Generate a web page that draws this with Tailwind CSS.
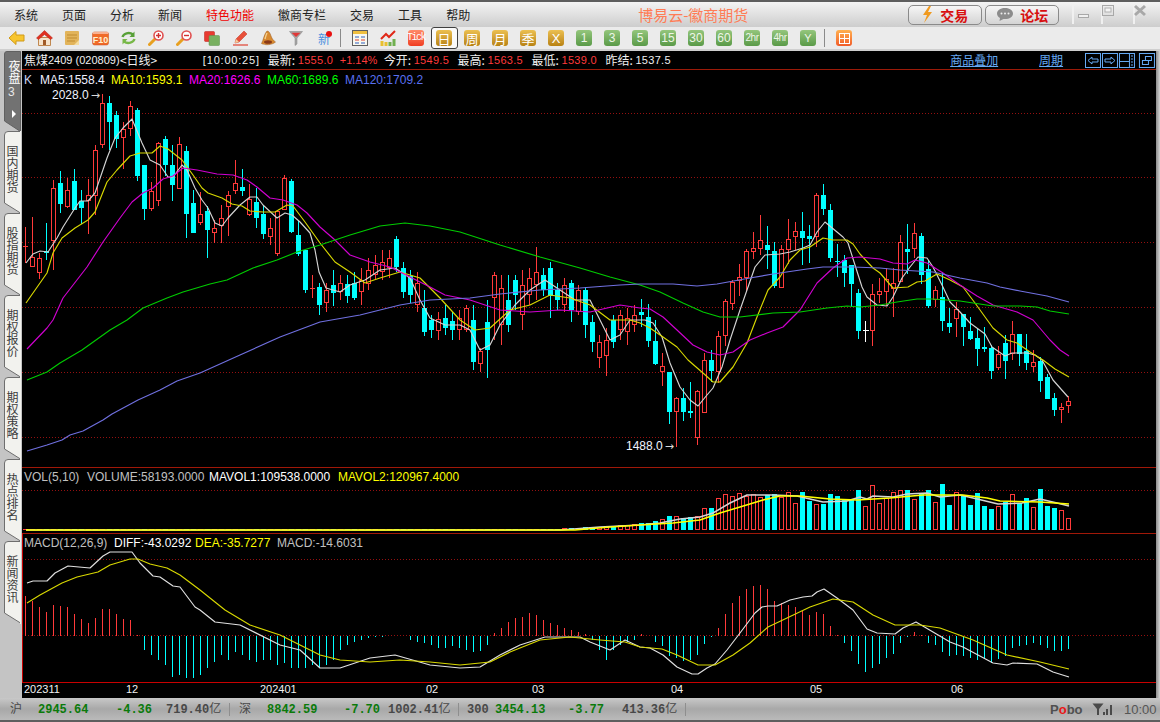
<!DOCTYPE html>
<html lang="zh-CN">
<head>
    <meta charset="UTF-8" />
    <title>博易云-徽商期货</title>
    <script src="https://cdn.jsdelivr.net/npm/@tailwindcss/browser@4"></script>
</head>
<body class="bg-[#c4c4c4]">
<div class="w-[1160px] h-[722px] overflow-hidden flex flex-col text-[12px] leading-none [font-family:'Liberation_Sans','Noto_Sans_CJK_SC',sans-serif]">

    <!-- Title bar -->
    <div class="h-[27px] shrink-0 flex items-center border-t-2 border-[#5e5e5e] bg-gradient-to-b from-[#f4f4f4] to-[#cdcdcd] text-[#222]">
        <div class="flex pl-[14px] gap-[24px] [font-family:'Noto_Sans_CJK_SC',sans-serif]">
            <span>系统</span><span>页面</span><span>分析</span><span>新闻</span>
            <span class="text-[#f00000]">特色功能</span>
            <span>徽商专栏</span><span>交易</span><span>工具</span><span>帮助</span>
        </div>
        <div class="ml-[168px] w-[270px] text-[15px] text-[#ff7c55] [font-family:'Noto_Sans_CJK_SC',sans-serif]">博易云-徽商期货</div>
        <button class="w-[74px] h-[20px] flex items-center justify-center gap-[7px] rounded-[5px] border border-[#8a8a8a] bg-gradient-to-b from-[#f6f6f6] to-[#d4d4d4] text-[#d81010] text-[14px] font-bold [font-family:'Noto_Sans_CJK_SC',sans-serif]">
            <svg width="11" height="17" viewBox="0 0 11 17"><path d="M7 0 L1 9 H5 L2 17 L10 6 H6 L9 0 Z" fill="#f09a20"/></svg>
            交易
        </button>
        <button class="ml-[3px] w-[74px] h-[20px] flex items-center justify-center gap-[6px] rounded-[5px] border border-[#8a8a8a] bg-gradient-to-b from-[#f6f6f6] to-[#d4d4d4] text-[#d81010] text-[14px] font-bold [font-family:'Noto_Sans_CJK_SC',sans-serif]">
            <svg width="18" height="15" viewBox="0 0 18 15"><path d="M9 1 C4 1 1 3.5 1 6.5 C1 8.5 2.4 10 4 11 L3.5 14 L7.5 12 C13 12.500 17 10 17 6.500 C17 3.500 14 1 9 1 Z" fill="#8c8c8c"/><circle cx="5.500" cy="6.500" r="1" fill="#eee"/><circle cx="9" cy="6.500" r="1" fill="#eee"/><circle cx="12.500" cy="6.500" r="1" fill="#eee"/></svg>
            论坛
        </button>
        <svg class="ml-[13px]" width="84" height="22" viewBox="0 0 84 22">
            <path d="M1 0V20M30 0V20M62 0V20" stroke="#f0f0f0" stroke-width="2"/>
            <rect x="6.500" y="10.500" width="10" height="3" fill="#f0f0f0" stroke="#a8a8a8"/>
            <rect x="30.500" y="1.500" width="11" height="10" fill="none" stroke="#a8a8a8"/>
            <rect x="33" y="4" width="6" height="4" fill="#f4f4f4" stroke="#b0b0b0"/>
            <path d="M63 2 L73 11 M73 2 L63 11" stroke="#a8a8a8" stroke-width="3"/>
        </svg>
    </div>

    <!-- Toolbar -->
    <div class="h-[24px] shrink-0 flex items-center pl-[2px] bg-[#ebebeb] border-b-2 border-[#cfcfcf] text-[#fff]">
        <div class="w-[28px] flex justify-center"><svg width="17" height="16" viewBox="0 0 17 16"><path d="M1 8 L8 1.500 V5 H16 V11 H8 V14.500 Z" fill="#f7c52e" stroke="#d09a18"/></svg></div>
        <div class="w-[28px] flex justify-center"><svg width="17" height="16" viewBox="0 0 17 16"><path d="M2.500 7.500 V15.500 H14.500 V7.500 Z" fill="#f6e4cc" stroke="#c08850"/><path d="M7 10 H10 V15 H7 Z" fill="#a05a28"/><path d="M0.500 8 L8.500 0.500 L16.500 8 L14.500 9.500 L8.500 4.500 L2.500 9.500 Z" fill="#e03020" stroke="#b02010" stroke-width="0.500"/></svg></div>
        <div class="w-[28px] flex justify-center"><svg width="16" height="16" viewBox="0 0 16 16"><rect x="1" y="1" width="14" height="14" rx="1" fill="#e2b45a"/><path d="M3 5H13M3 8H13M3 11H11" stroke="#c08c30"/><path d="M15 10 L10 15 H15 Z" fill="#f4dca0"/></svg></div>
        <div class="w-[28px] flex justify-center"><svg width="17" height="16" viewBox="0 0 17 16"><rect x="0.500" y="2" width="16" height="13" rx="2" fill="#f06a28" stroke="#c84a18" stroke-width="0.500"/><rect x="1" y="2" width="15" height="2" fill="#f8b090"/><text x="8.500" y="13" font-size="9" font-weight="bold" fill="#fff0d0" text-anchor="middle" font-family="Liberation Sans">F10</text></svg></div>
        <div class="w-[28px] flex justify-center"><svg width="15" height="14" viewBox="0 0 15 14"><path d="M1.500 6 C2.500 2.500 8 0.500 12 3.500" fill="none" stroke="#58a038" stroke-width="2.400"/><path d="M13.500 0.500 V6 H8.500 Z" fill="#58a038"/><path d="M13.500 8 C12.500 11.500 7 13.500 3 10.500" fill="none" stroke="#78b848" stroke-width="2.400"/><path d="M1.500 13.500 V8 H6.500 Z" fill="#78b848"/></svg></div>
        <div class="w-[28px] flex justify-center"><svg width="17" height="16" viewBox="0 0 17 16"><path d="M7 9 L1.500 14.500" stroke="#e8a020" stroke-width="3" stroke-linecap="round"/><circle cx="10.500" cy="5.500" r="4.500" fill="#fff" stroke="#e05050" stroke-width="1.600"/><path d="M8 5.500H13M10.500 3V8" stroke="#d03030" stroke-width="1.400"/></svg></div>
        <div class="w-[28px] flex justify-center"><svg width="17" height="16" viewBox="0 0 17 16"><path d="M7 9 L1.500 14.500" stroke="#e8a020" stroke-width="3" stroke-linecap="round"/><circle cx="10.500" cy="5.500" r="4.500" fill="#fff" stroke="#e05050" stroke-width="1.600"/><path d="M8 5.500H13" stroke="#d03030" stroke-width="1.400"/></svg></div>
        <div class="w-[28px] flex justify-center"><svg width="16" height="15" viewBox="0 0 16 15"><rect x="0.500" y="0.500" width="10" height="10" rx="1" fill="#e83a30" stroke="#b82018" stroke-width="0.500"/><rect x="5" y="4.500" width="10.500" height="10" rx="1" fill="#78b060" stroke="#589048" stroke-width="0.500"/></svg></div>
        <div class="w-[28px] flex justify-center"><svg width="15" height="16" viewBox="0 0 15 16"><path d="M3 9 L11 1 L14 4 L6 12 L2 13 Z" fill="#e8503a" stroke="#c03020" stroke-width="0.500"/><path d="M3 9 L6 12 L2 13 Z" fill="#f4d0a0"/><path d="M0 15 H15" stroke="#e04030" stroke-width="1.200"/></svg></div>
        <div class="w-[28px] flex justify-center"><svg width="15" height="16" viewBox="0 0 15 16"><path d="M6 1 C8 1 9 3 10 6 C11 9 13 11 14.500 12 C11 15 4 15.500 0.500 13.500 C2.500 10 3 4 6 1 Z" fill="#d88a30" stroke="#9a5a20" stroke-width="0.500"/><ellipse cx="7" cy="12" rx="4" ry="1.800" fill="#8a3a18"/><path d="M6 3 C5 5 4.500 7 4 9" stroke="#f4d090" stroke-width="1.400" fill="none"/></svg></div>
        <div class="w-[28px] flex justify-center"><svg width="14" height="15" viewBox="0 0 14 15"><path d="M0.500 0.500 H13.500 L8 7 V13 L6 14.500 V7 Z" fill="#a8a8a8" stroke="#808080" stroke-width="0.500"/><path d="M2.500 1.800 H11.500 L7 6 Z" fill="#e03838"/></svg></div>
        <div class="w-[28px] flex justify-center relative text-[#4a90e0] text-[12px] [font-family:'Noto_Sans_CJK_SC',sans-serif] pt-[2px]">新<span class="absolute right-[6px] top-0 w-[6px] h-[6px] rounded-full bg-[#e81010]"></span></div>
        <div class="w-[8px] h-[18px] pl-[2px]"><div class="w-px h-full bg-[#8a8a8a]"></div></div>

        <div class="w-[28px] flex justify-center"><svg width="16" height="16" viewBox="0 0 16 16"><rect x="0.500" y="0.500" width="15" height="15" fill="#f8f8f0" stroke="#606060"/><rect x="1" y="1" width="14" height="3" fill="#f0c040"/><path d="M3 7H7M9 7H13" stroke="#3060c0"/><path d="M3 10H7M9 10H13" stroke="#e04030"/><path d="M3 13H7M9 13H13" stroke="#3060c0"/></svg></div>
        <div class="w-[28px] flex justify-center"><svg width="17" height="16" viewBox="0 0 17 16"><path d="M2 11V16M6 12V16" stroke="#e8c030" stroke-width="3"/><path d="M10 12V16M14 9V16" stroke="#70b050" stroke-width="3"/><path d="M1 9 L6 4 L9 7 L15 1" stroke="#e02818" stroke-width="2" fill="none"/></svg></div>
        <div class="w-[28px] flex justify-center"><div class="w-[16px] h-[16px] rounded-[3px] bg-gradient-to-b from-[#ff8a68] to-[#f03c20] text-[#fff] text-[10px] flex items-center justify-center [font-family:'Liberation_Mono',monospace] tracking-[-1.500px]">Tick</div></div>
        <div class="w-[28px] h-[23px] flex justify-center items-center"><div class="w-[27px] h-[22px] rounded-[3px] border border-[#404040] bg-[#fafafa] flex items-center justify-center"><div class="w-[16px] h-[16px] rounded-[3px] bg-gradient-to-b from-[#ecc050] to-[#b88210] text-[#fff] text-[13px] flex items-center justify-center [font-family:'Noto_Sans_CJK_SC',sans-serif]">日</div></div></div>
        <div class="w-[28px] flex justify-center"><div class="w-[16px] h-[16px] rounded-[3px] bg-gradient-to-b from-[#ecc050] to-[#b88210] text-[#fff] text-[13px] flex items-center justify-center [font-family:'Noto_Sans_CJK_SC',sans-serif]">周</div></div>
        <div class="w-[28px] flex justify-center"><div class="w-[16px] h-[16px] rounded-[3px] bg-gradient-to-b from-[#ecc050] to-[#b88210] text-[#fff] text-[13px] flex items-center justify-center [font-family:'Noto_Sans_CJK_SC',sans-serif]">月</div></div>
        <div class="w-[28px] flex justify-center"><div class="w-[16px] h-[16px] rounded-[3px] bg-gradient-to-b from-[#ecc050] to-[#b88210] text-[#fff] text-[13px] flex items-center justify-center [font-family:'Noto_Sans_CJK_SC',sans-serif]">季</div></div>
        <div class="w-[28px] flex justify-center"><div class="w-[16px] h-[16px] rounded-[3px] bg-gradient-to-b from-[#ecc050] to-[#b88210] text-[#fff] text-[13px] flex items-center justify-center">X</div></div>
        <div class="w-[28px] flex justify-center"><div class="w-[16px] h-[16px] rounded-[3px] bg-gradient-to-b from-[#94c67c] to-[#5a9a48] text-[#eef6e8] text-[12px] flex items-center justify-center">1</div></div>
        <div class="w-[28px] flex justify-center"><div class="w-[16px] h-[16px] rounded-[3px] bg-gradient-to-b from-[#94c67c] to-[#5a9a48] text-[#eef6e8] text-[12px] flex items-center justify-center">3</div></div>
        <div class="w-[28px] flex justify-center"><div class="w-[16px] h-[16px] rounded-[3px] bg-gradient-to-b from-[#94c67c] to-[#5a9a48] text-[#eef6e8] text-[12px] flex items-center justify-center">5</div></div>
        <div class="w-[28px] flex justify-center"><div class="w-[16px] h-[16px] rounded-[3px] bg-gradient-to-b from-[#94c67c] to-[#5a9a48] text-[#eef6e8] text-[12px] flex items-center justify-center">15</div></div>
        <div class="w-[28px] flex justify-center"><div class="w-[16px] h-[16px] rounded-[3px] bg-gradient-to-b from-[#94c67c] to-[#5a9a48] text-[#eef6e8] text-[12px] flex items-center justify-center">30</div></div>
        <div class="w-[28px] flex justify-center"><div class="w-[16px] h-[16px] rounded-[3px] bg-gradient-to-b from-[#94c67c] to-[#5a9a48] text-[#eef6e8] text-[12px] flex items-center justify-center">60</div></div>
        <div class="w-[28px] flex justify-center"><div class="w-[16px] h-[16px] rounded-[3px] bg-gradient-to-b from-[#94c67c] to-[#5a9a48] text-[#eef6e8] text-[10px] flex items-center justify-center tracking-[-0.500px]">2hr</div></div>
        <div class="w-[28px] flex justify-center"><div class="w-[16px] h-[16px] rounded-[3px] bg-gradient-to-b from-[#94c67c] to-[#5a9a48] text-[#eef6e8] text-[10px] flex items-center justify-center tracking-[-0.500px]">4hr</div></div>
        <div class="w-[28px] flex justify-center"><div class="w-[16px] h-[16px] rounded-[3px] bg-gradient-to-b from-[#94c67c] to-[#5a9a48] text-[#eef6e8] text-[11px] flex items-center justify-center">Y</div></div>
        <div class="w-[8px] h-[18px] pl-[2px]"><div class="w-px h-full bg-[#8a8a8a]"></div></div>
        <div class="w-[28px] flex justify-center"><div class="w-[16px] h-[16px] rounded-[3px] bg-gradient-to-b from-[#ffb050] to-[#f05a28] flex items-center justify-center"><div class="w-[11px] h-[11px] border border-[#fff] bg-[linear-gradient(#fff,#fff),linear-gradient(#fff,#fff)] bg-[length:1px_100%,100%_1px] bg-center bg-no-repeat"></div></div></div>
    </div>

    <!-- Main area -->
    <div class="h-[647px] shrink-0 flex">
        <!-- Left vertical tabs -->
        <div class="w-[22px] shrink-0 pl-[4px] flex flex-col bg-[#c4c4c4] [font-family:'Noto_Sans_CJK_SC',sans-serif] text-[#3c3c3c]">
            <div class="relative w-[16px] h-[80px] text-[#fff]">
                <svg class="absolute inset-0" width="17" height="81" viewBox="0 0 17 81"><path d="M0.500 3 Q0.500 0.500 3 0.500 H16.500 V80.500 L0.500 70 Z" fill="#727272" stroke="#606060"/><path d="M8 59 L12 63 L8 67 Z" fill="#fff"/></svg>
                <div class="relative pt-[9px] pl-[2px] flex flex-col"><span class="[writing-mode:vertical-rl] [text-orientation:upright]">夜盘</span><span class="pt-[2px] pl-[2px] text-[#e8e8e8] text-[12px] [font-family:'Liberation_Sans',sans-serif]">3</span></div>
            </div>
            <div class="relative w-[16px] h-[82px]">
                <svg class="absolute inset-0" width="17" height="83" viewBox="0 0 17 83"><path d="M16.500 0.500 H4 Q0.500 0.500 0.500 4 V72 L16.500 82 V0.500" fill="#f2f2ee" stroke="#6e6e6e"/><path d="M16.500 0 V83" stroke="#f2f2ee"/></svg>
                <div class="relative pt-[14px] pl-[2px] [writing-mode:vertical-rl] [text-orientation:upright]">国内期货</div>
            </div>
            <div class="relative w-[16px] h-[82px]">
                <svg class="absolute inset-0" width="17" height="83" viewBox="0 0 17 83"><path d="M16.500 0.500 H4 Q0.500 0.500 0.500 4 V72 L16.500 82 V0.500" fill="#f2f2ee" stroke="#6e6e6e"/><path d="M16.500 0 V83" stroke="#f2f2ee"/></svg>
                <div class="relative pt-[14px] pl-[2px] [writing-mode:vertical-rl] [text-orientation:upright]">股指期货</div>
            </div>
            <div class="relative w-[16px] h-[82px]">
                <svg class="absolute inset-0" width="17" height="83" viewBox="0 0 17 83"><path d="M16.500 0.500 H4 Q0.500 0.500 0.500 4 V72 L16.500 82 V0.500" fill="#f2f2ee" stroke="#6e6e6e"/><path d="M16.500 0 V83" stroke="#f2f2ee"/></svg>
                <div class="relative pt-[14px] pl-[2px] [writing-mode:vertical-rl] [text-orientation:upright]">期权报价</div>
            </div>
            <div class="relative w-[16px] h-[82px]">
                <svg class="absolute inset-0" width="17" height="83" viewBox="0 0 17 83"><path d="M16.500 0.500 H4 Q0.500 0.500 0.500 4 V72 L16.500 82 V0.500" fill="#f2f2ee" stroke="#6e6e6e"/><path d="M16.500 0 V83" stroke="#f2f2ee"/></svg>
                <div class="relative pt-[14px] pl-[2px] [writing-mode:vertical-rl] [text-orientation:upright]">期权策略</div>
            </div>
            <div class="relative w-[16px] h-[82px]">
                <svg class="absolute inset-0" width="17" height="83" viewBox="0 0 17 83"><path d="M16.500 0.500 H4 Q0.500 0.500 0.500 4 V72 L16.500 82 V0.500" fill="#f2f2ee" stroke="#6e6e6e"/><path d="M16.500 0 V83" stroke="#f2f2ee"/></svg>
                <div class="relative pt-[14px] pl-[2px] [writing-mode:vertical-rl] [text-orientation:upright]">热点排名</div>
            </div>
            <div class="relative w-[16px] h-[82px]">
                <svg class="absolute inset-0" width="17" height="83" viewBox="0 0 17 83"><path d="M16.500 0.500 H4 Q0.500 0.500 0.500 4 V72 L16.500 82 V0.500" fill="#f2f2ee" stroke="#6e6e6e"/><path d="M16.500 0 V83" stroke="#f2f2ee"/></svg>
                <div class="relative pt-[14px] pl-[2px] [writing-mode:vertical-rl] [text-orientation:upright]">新闻资讯</div>
            </div>
        </div>

        <!-- Chart panel -->
        <div class="relative w-[1134px] shrink-0 bg-[#000]">
            <svg id="chart" class="absolute left-0 top-0" width="1134" height="647" viewBox="22 51 1134 647"></svg>

            <div class="relative h-[18px] pl-[2px] flex items-center whitespace-nowrap text-[#f0f0f0] [font-family:'Noto_Sans_CJK_SC',sans-serif]">
                <span class="w-[24px]">焦煤</span>
                <span class="w-[72px] text-[11px] [font-family:'Liberation_Sans',sans-serif]">2409 (020809)</span>
                <span class="w-[83px]">&lt;日线&gt;</span>
                <span class="w-[65px] text-[11px] [font-family:'Liberation_Sans',sans-serif] tracking-[0.800px]">[10:00:25]</span>
                <span class="w-[30px]">最新:</span>
                <span class="w-[42px] text-[#ff3a3a] text-[11px] [font-family:'Liberation_Sans',sans-serif] tracking-[0.300px]">1555.0</span>
                <span class="w-[44px] text-[#ff3a3a] text-[11px] [font-family:'Liberation_Sans',sans-serif]">+1.14%</span>
                <span class="w-[30px]">今开:</span>
                <span class="w-[44px] text-[#ff3a3a] text-[11px] [font-family:'Liberation_Sans',sans-serif] tracking-[0.300px]">1549.5</span>
                <span class="w-[30px]">最高:</span>
                <span class="w-[44px] text-[#ff3a3a] text-[11px] [font-family:'Liberation_Sans',sans-serif] tracking-[0.300px]">1563.5</span>
                <span class="w-[30px]">最低:</span>
                <span class="w-[44px] text-[#ff3a3a] text-[11px] [font-family:'Liberation_Sans',sans-serif] tracking-[0.300px]">1539.0</span>
                <span class="w-[30px]">昨结:</span>
                <span class="w-[315px] text-[11px] [font-family:'Liberation_Sans',sans-serif] tracking-[0.300px]">1537.5</span>
                <span class="w-[89px] text-[#66aaf5] underline">商品叠加</span>
                <span class="w-[46px] text-[#66aaf5] underline">周期</span>
                <svg width="71" height="15" viewBox="0 0 71 15" fill="none" stroke="#66aaf5">
                    <rect x="0.500" y="0.500" width="15" height="14"/><path d="M3 7.500 L7 4 V6 H13 V9 H7 V11 Z"/>
                    <rect x="17.500" y="0.500" width="15" height="14"/><path d="M30 7.500 L26 4 V6 H20 V9 H26 V11 Z"/>
                    <rect x="34.500" y="0.500" width="15" height="14"/><path d="M34 8.500 H44 M44.500 1 V14 M46 3 H48 M46 6 H48 M46 9 H48 M46 12 H48"/>
                    <rect x="54.500" y="0.500" width="15" height="14"/><rect x="60.500" y="3.500" width="6" height="4"/><rect x="57.500" y="7.500" width="6" height="4"/>
                </svg>
            </div>
            <div class="relative h-[20px] mt-px pl-[2px] flex items-center whitespace-nowrap">
                <span class="w-[16px] text-[#c8d4f0]">K</span>
                <span class="w-[71px] text-[#f0f0ff]">MA5:1558.4</span>
                <span class="w-[78px] text-[#ffff00]">MA10:1593.1</span>
                <span class="w-[78px] text-[#ff00ff]">MA20:1626.6</span>
                <span class="w-[78px] text-[#00ff00]">MA60:1689.6</span>
                <span class="text-[#5a70f0]">MA120:1709.2</span>
            </div>

            <!-- Labels laid over the chart -->
            <div class="absolute left-[30px] top-[38px] flex items-center gap-[2px] text-[#f0f4ff] whitespace-nowrap">2028.0 <span class="text-[#d8d8d8] [font-family:'DejaVu_Sans',sans-serif] text-[11px]">→</span></div>
            <div class="absolute left-[604px] top-[389px] flex items-center gap-[2px] text-[#f0f4ff] whitespace-nowrap">1488.0 <span class="text-[#d8d8d8] [font-family:'DejaVu_Sans',sans-serif] text-[11px]">→</span></div>
            <div class="absolute left-[2px] top-[420px] flex whitespace-nowrap">
                <span class="w-[63px] text-[#c0c0c0]">VOL(5,10)</span>
                <span class="w-[122px] text-[#c0c0c0]">VOLUME:58193.0000</span>
                <span class="w-[129px] text-[#fff]">MAVOL1:109538.0000</span>
                <span class="text-[#ffff00]">MAVOL2:120967.4000</span>
            </div>
            <div class="absolute left-[2px] top-[486px] flex whitespace-nowrap">
                <span class="w-[90px] text-[#c0c0c0]">MACD(12,26,9)</span>
                <span class="w-[81px] text-[#fff]">DIFF:-43.0292</span>
                <span class="w-[82px] text-[#ffff00]">DEA:-35.7277</span>
                <span class="text-[#c0c0c0]">MACD:-14.6031</span>
            </div>
            <div class="absolute left-0 right-0 bottom-0 h-[14px] text-[#f0f0f0] text-[11px] flex">
                <span class="w-[104px] pl-[2px]">202311</span>
                <span class="w-[134px]">12</span>
                <span class="w-[166px]">202401</span>
                <span class="w-[106px]">02</span>
                <span class="w-[139px]">03</span>
                <span class="w-[139px]">04</span>
                <span class="w-[141px]">05</span>
                <span>06</span>
            </div>
        </div>
        <div class="w-[4px] shrink-0 bg-gradient-to-r from-[#8c8c8c] to-[#d4d4d4]"></div>
    </div>

    <!-- Status bar -->
    <div class="h-[24px] shrink-0 flex items-center pt-px border-b-2 border-[#5e5e5e] bg-gradient-to-b from-[#c8c8c8] via-[#a8a8a8] to-[#bababa] text-[#484848] font-bold whitespace-nowrap [font-family:'Liberation_Mono','Noto_Sans_CJK_SC',monospace]">
        <span class="w-[38px] pl-[10px] font-normal">沪</span>
        <span class="w-[78px] text-[#0a7a0a]">2945.64</span>
        <span class="w-[50px] text-[#0a7a0a]">-4.36</span>
        <span class="w-[63px]">719.40<span class="font-normal">亿</span></span>
        <span class="w-[10px] h-[13px] border-l border-[#8e8e8e]"></span>
        <span class="w-[28px] font-normal">深</span>
        <span class="w-[77px] text-[#0a7a0a]">8842.59</span>
        <span class="w-[44px] text-[#0a7a0a]">-7.70</span>
        <span class="w-[70px]">1002.41<span class="font-normal">亿</span></span>
        <span class="w-[9px] h-[13px] border-l border-[#8e8e8e]"></span>
        <span class="w-[28px]">300</span>
        <span class="w-[73px] text-[#0a7a0a]">3454.13</span>
        <span class="w-[54px] text-[#0a7a0a]">-3.77</span>
        <span class="w-[63px]">413.36<span class="font-normal">亿</span></span>
        <span class="w-[365px] h-[13px] border-l border-[#8e8e8e]"></span>
        <span class="w-[42px] text-[13px] text-[#505050] [font-family:'Liberation_Sans',sans-serif]">P<span class="text-[#e81818]">o</span>bo</span>
        <svg width="21" height="13" viewBox="0 0 21 13"><path d="M0.500 0.500 H11.500 L7 6 V12 H5 V6 Z" fill="#4a4a4a"/><path d="M11 9H13V12H11ZM14 6H16V12H14ZM18 2H20V12H18Z" fill="#4a4a4a"/></svg>
        <span class="ml-[11px] font-normal text-[#555] [font-family:'Liberation_Sans',sans-serif] text-[13px]">10:00</span>
    </div>
</div>

<script>
    // [body top, body bottom, high, low, colour] in screen pixels
    const candles = [
        [246,247,227,263,'r'],[257,267,217,267,'r'],[258,273,253,279,'r'],[251,253,223,260,'c'],[188,241,180,270,'r'],
        [183,204,171,213,'c'],[190,207,178,208,'r'],[181,210,169,210,'c'],[201,208,190,224,'c'],[195,201,179,234,'r'],
        [150,196,145,215,'r'],[103,145,94,148,'r'],[103,122,96,150,'c'],[115,139,111,148,'c'],[129,138,122,169,'r'],
        [106,129,101,136,'r'],[110,176,108,181,'c'],[165,209,165,220,'c'],[191,209,182,211,'r'],[143,201,142,206,'r'],
        [139,165,136,176,'c'],[165,185,145,201,'c'],[144,189,137,189,'r'],[151,214,146,238,'c'],[203,233,190,233,'c'],
        [214,223,192,225,'r'],[211,230,206,258,'c'],[228,233,220,243,'r'],[218,226,205,243,'r'],[195,207,191,236,'r'],
        [183,191,160,194,'r'],[187,191,169,196,'c'],[199,215,184,216,'r'],[202,218,188,228,'c'],[214,234,205,239,'c'],
        [228,237,218,245,'r'],[211,254,210,256,'r'],[178,210,175,210,'r'],[181,232,179,233,'c'],[235,254,220,256,'c'],
        [250,290,250,293,'c'],[288,289,275,298,'r'],[287,305,283,315,'c'],[290,303,283,312,'r'],[285,293,270,306,'c'],
        [283,292,275,300,'r'],[284,296,275,303,'c'],[283,298,272,300,'c'],[280,292,268,305,'r'],[270,284,258,290,'r'],
        [265,275,255,280,'r'],[262,272,250,280,'r'],[258,268,250,278,'r'],[239,267,236,272,'c'],[268,292,262,298,'c'],
        [276,295,270,303,'c'],[283,305,272,312,'r'],[308,332,290,336,'c'],[320,330,315,338,'c'],[319,331,312,340,'r'],
        [318,328,305,335,'c'],[321,330,312,340,'c'],[318,330,310,340,'r'],[308,330,305,332,'r'],[320,362,305,370,'c'],
        [351,364,348,372,'r'],[322,350,300,378,'c'],[275,298,272,340,'r'],[288,325,275,345,'r'],[300,325,275,332,'c'],
        [280,295,275,310,'c'],[285,315,270,330,'r'],[278,295,268,305,'r'],[272,285,247,300,'r'],[275,290,268,296,'c'],
        [268,296,262,318,'c'],[290,300,283,310,'c'],[285,305,278,312,'r'],[283,310,280,322,'c'],[290,312,285,315,'r'],
        [290,325,287,338,'c'],[322,342,315,352,'c'],[342,358,335,368,'r'],[340,356,328,376,'r'],[320,342,315,348,'c'],
        [315,330,310,340,'r'],[318,332,308,345,'r'],[315,325,305,332,'r'],[312,315,299,327,'c'],[317,341,304,347,'c'],
        [341,364,320,365,'c'],[366,372,353,386,'r'],[372,412,372,424,'c'],[398,412,397,447,'r'],[398,412,388,421,'c'],
        [411,413,382,418,'c'],[391,438,390,445,'r'],[360,413,353,413,'r'],[360,371,350,382,'c'],[336,372,331,383,'r'],
        [301,336,299,346,'r'],[282,304,280,310,'r'],[277,281,264,296,'r'],[251,278,249,291,'r'],[248,252,232,259,'r'],
        [240,249,215,255,'r'],[245,250,226,269,'c'],[251,286,242,288,'c'],[249,288,245,288,'r'],[239,250,219,264,'r'],
        [231,237,222,250,'r'],[231,238,212,265,'c'],[236,239,225,263,'c'],[195,237,193,247,'r'],[195,209,184,215,'c'],
        [210,258,204,262,'c'],[261,262,244,277,'c'],[260,273,255,287,'c'],[265,284,265,307,'c'],[293,331,289,339,'c'],
        [330,331,321,342,'w'],[294,331,284,346,'r'],[291,295,278,303,'r'],[279,292,268,306,'r'],[283,289,268,317,'r'],
        [242,282,235,282,'r'],[249,252,224,274,'c'],[233,249,223,258,'r'],[236,275,233,284,'c'],[269,306,260,308,'c'],
        [290,300,286,307,'r'],[297,321,272,331,'c'],[323,327,308,333,'c'],[309,319,302,337,'r'],[314,327,314,346,'c'],
        [331,339,317,340,'c'],[338,349,329,366,'c'],[347,349,327,352,'c'],[348,371,345,379,'c'],[354,368,346,370,'r'],
        [343,361,335,379,'c'],[334,354,321,360,'r'],[334,354,334,366,'c'],[351,363,334,370,'c'],[362,367,350,372,'r'],
        [361,381,357,392,'c'],[377,399,374,399,'c'],[398,410,393,416,'c'],[407,410,403,423,'r'],[401,406,396,413,'r']
    ];

    // tops of the volume bars from index 70 on, the earlier ones are a pixel high
    const volumeTops = [529,529,529,529,529,529,529,528,528,528,527,527,527,526,526,525,525,524,
        523,523,521,519,516,516,518,517,516,508,508,498,494,496,493,496,494,497,495,494,497,492,503,492,501,504,504,
        494,496,500,500,490,506,485,503,498,492,490,490,499,493,490,502,484,505,492,496,505,493,506,509,506,502,494,503,498,507,489,506,508,510,518];

    // end of each MACD bar, the bar starts on the zero line at 635.5
    const macdEnds = [596,601,607,612,605,606,607,614,619,623,618,609,609,614,619,620,635,650,655,660,665,677,675,678,678,675,668,662,655,660,
        652,655,660,662,660,660,665,663,668,668,668,665,667,665,660,650,645,642,640,638,637,637,636,636,636,640,642,643,645,648,
        648,646,648,650,652,651,645,633,628,622,618,617,613,615,620,623,625,628,630,632,634,640,650,660,650,645,642,640,634,636,
        642,646,656,658,661,660,655,644,637,628,614,603,596,589,586,585,589,601,603,605,607,611,615,612,614,626,635,643,651,664,
        672,668,664,658,654,643,637,632,635,643,645,652,656,655,656,658,660,659,663,659,656,648,646,645,643,645,648,651,651,649];

    const lines = [
        { color: '#d4d4d4', pts: '26,263 33,254 40,251 48,252 57,238 63,227 75,208 80,201 88,201 95,193 107,158 115,138 123,128 132,119 142,143 150,160 160,165 168,177 173,177 182,165 187,170 195,188 202,200 208,208 215,223 222,226 228,218 240,205 250,197 257,197 263,205 277,218 285,213 292,215 300,222 310,233 315,250 319,272 326,288 340,292 350,285 365,280 380,270 395,268 410,278 420,300 430,318 445,325 460,325 470,330 480,350 490,345 500,325 515,305 530,290 545,280 560,290 575,300 590,300 600,320 610,340 620,335 630,320 640,320 645,320 653,323 662,337 670,363 680,387 690,400 698,406 707,395 713,388 722,367 730,340 740,310 747,290 755,267 765,255 780,254 790,252 803,248 810,245 817,232 825,222 837,232 843,237 848,243 855,265 862,287 867,297 877,305 887,306 893,297 902,278 910,267 918,257 927,258 933,267 942,285 950,302 960,312 970,323 985,334 992,347 1005,356 1012,353 1027,353 1035,355 1042,360 1053,380 1068,397' },
        { color: '#d8d800', pts: '26,303 47,273 53,253 62,238 75,228 88,220 95,212 107,182 117,170 130,156 140,153 152,153 160,146 168,149 182,160 193,175 202,188 208,193 222,198 232,204 242,206 250,211 263,212 275,212 287,205 293,206 305,222 320,243 335,262 350,272 365,283 380,278 400,272 420,278 440,298 460,320 475,330 490,328 510,310 530,305 550,295 570,298 590,305 610,320 630,320 640,323 650,328 663,337 677,347 688,360 703,373 713,382 720,382 733,367 747,343 757,317 768,290 780,277 790,260 800,250 810,247 823,238 833,240 847,240 853,244 860,254 873,268 880,273 893,288 908,287 917,282 925,281 937,274 950,280 963,287 975,303 993,328 1007,340 1017,343 1030,352 1043,360 1055,369 1069,377' },
        { color: '#d000d0', pts: '27,349 47,328 53,320 63,298 87,267 103,242 120,218 132,202 143,193 153,188 163,179 173,176 183,168 197,170 217,174 233,175 247,180 257,187 270,198 283,200 297,205 307,213 320,227 335,240 350,255 370,262 390,267 410,277 430,287 445,295 470,300 500,310 530,312 560,310 590,312 620,305 640,308 650,309 663,317 677,330 693,345 707,352 720,355 733,352 750,340 767,333 783,327 800,310 817,283 833,268 847,258 860,257 880,259 893,263 907,264 915,260 927,263 943,273 960,285 977,296 993,305 1017,312 1033,320 1050,340 1060,350 1069,356' },
        { color: '#00cc00', pts: '27,380 47,372 60,363 82,350 110,330 127,320 143,308 167,298 183,292 210,284 227,280 253,268 277,260 297,252 320,245 350,235 380,226 405,223 430,226 460,232 500,245 540,257 580,268 610,277 640,285 660,292 683,303 703,312 720,317 740,317 773,313 800,312 827,308 847,306 860,307 880,305 897,302 917,299 933,299 960,301 993,306 1020,306 1037,307 1050,311 1069,314' },
        { color: '#7070e0', pts: '27,451 47,445 62,440 70,435 83,431 103,420 112,414 138,400 160,390 177,381 200,373 240,355 280,337 320,322 360,315 400,305 430,300 470,298 500,294 540,290 580,288 620,285 640,284 673,284 697,286 717,284 750,278 773,274 807,269 823,267 853,267 880,268 900,270 933,272 960,278 987,283 1000,287 1020,291 1047,296 1069,302' }
    ];
    const volLines = [
        { color: '#d4d4d4', pts: '26,530 560,530 600,527 640,525 660,523 680,519 700,517 713,513 730,503 747,495 773,495 797,496 823,502 847,501 860,497 867,499 873,496 893,497 907,494 927,493 940,497 960,495 973,498 998,504 1022,503 1040,499 1057,503 1069,506' },
        { color: '#ffff00', pts: '26,530 575,530 610,527 640,525 673,523 700,520 720,513 740,507 763,500 780,496 800,496 830,499 857,500 890,498 923,495 963,495 987,498 1000,501 1040,502 1069,504' }
    ];
    const macdLines = [
        { color: '#e0e0e0', pts: '27,583 33,581 47,581 55,573 68,566 90,568 103,556 110,552 132,552 140,563 153,576 160,577 173,586 180,587 195,607 200,610 215,622 240,625 280,645 300,650 320,668 340,668 370,658 395,655 430,665 460,668 480,667 500,655 520,645 545,637 580,637 590,642 610,650 625,640 640,647 650,648 663,655 677,667 692,674 698,674 707,668 715,664 727,650 740,633 755,613 762,607 768,606 777,606 790,600 803,597 812,596 817,592 824,589 837,598 853,610 867,629 877,633 895,634 903,628 916,622 933,632 950,642 963,647 993,663 1007,665 1013,663 1037,664 1053,672 1069,677' },
        { color: '#d8d800', pts: '27,603 40,595 62,583 77,577 98,572 110,565 130,559 138,559 150,564 167,568 180,575 200,590 225,610 250,625 280,635 300,645 320,655 340,660 370,662 400,660 430,662 460,665 490,662 510,652 540,640 570,637 600,640 625,642 640,647 662,649 677,655 698,665 715,665 733,655 750,643 768,627 787,618 810,607 833,599 853,602 873,615 895,625 920,625 940,628 973,640 1007,655 1040,662 1069,669' }
    ];

    const RED = '#ff3a3a', CYAN = '#00ffff';
    const hline = (y, color) => `<path d="M22 ${y}H1156" stroke="${color}"/>`;
    const dotted = y => `<path d="M22 ${y}H1156" stroke="#941010" stroke-dasharray="1 2"/>`;
    const poly = (l, w = 1.15) => `<polyline points="${l.pts}" fill="none" stroke="${l.color}" stroke-width="${w}" stroke-linejoin="round"/>`;

    function candleSvg(c, i) {
        const x = 25.5 + 7 * i;
        const [top, bot, hi, lo, kind] = c;
        if (kind === 'w') return `<g shape-rendering="crispEdges"><path d="M${x} ${hi}V${lo}M${x - 3} ${top + .5}h6" stroke="#fff"/></g>`;
        const color = kind === 'r' ? RED : CYAN;
        let s = `<path d="M${x} ${hi}V${top}M${x} ${bot}V${lo}" stroke="${color}"/>`;
        if (kind === 'r' && bot - top > 2) {
            s += `<rect x="${x - 2}" y="${top + .5}" width="4" height="${bot - top - 1}" fill="#000" stroke="${color}"/>`;
        } else {
            s += `<rect x="${x - 2.5}" y="${top}" width="5" height="${Math.max(bot - top, 1)}" fill="${color}"/>`;
        }
        return s;
    }

    function volumeSvg(c, i) {
        const x = 25.5 + 7 * i;
        const top = i < 70 ? 529 : volumeTops[i - 70];
        if (c[4] === 'c') return `<rect x="${x - 2.5}" y="${top}" width="5" height="${530 - top}" fill="${CYAN}"/>`;
        if (530 - top < 3) return `<rect x="${x - 2.5}" y="${top}" width="5" height="${530 - top}" fill="${RED}"/>`;
        return `<rect x="${x - 2}" y="${top + .5}" width="4" height="${529 - top}" fill="#000" stroke="${RED}"/>`;
    }

    function macdSvg(end, i) {
        const x = 25.5 + 7 * i;
        return `<path d="M${x} 636V${end}" stroke="${end < 636 ? RED : CYAN}"/>`;
    }

    document.getElementById('chart').innerHTML = `
        <g shape-rendering="crispEdges">
            ${hline(69.5, '#9c1a08')}${hline(467.5, '#a01808')}${hline(533.5, '#a01808')}${hline(682.5, '#c80000')}
            <path d="M22.5 533V683" stroke="#c80000"/>
            ${[113, 177, 242, 307, 372, 437, 490, 559, 635].map(y => dotted(y + .5)).join('')}
            ${candles.map(candleSvg).join('')}
            ${candles.map(volumeSvg).join('')}
            ${macdEnds.map(macdSvg).join('')}
        </g>
        ${lines.map(l => poly(l)).join('')}${volLines.map(l => poly(l, 1.5)).join('')}${macdLines.map(l => poly(l)).join('')}`;
</script>
</body>
</html>
